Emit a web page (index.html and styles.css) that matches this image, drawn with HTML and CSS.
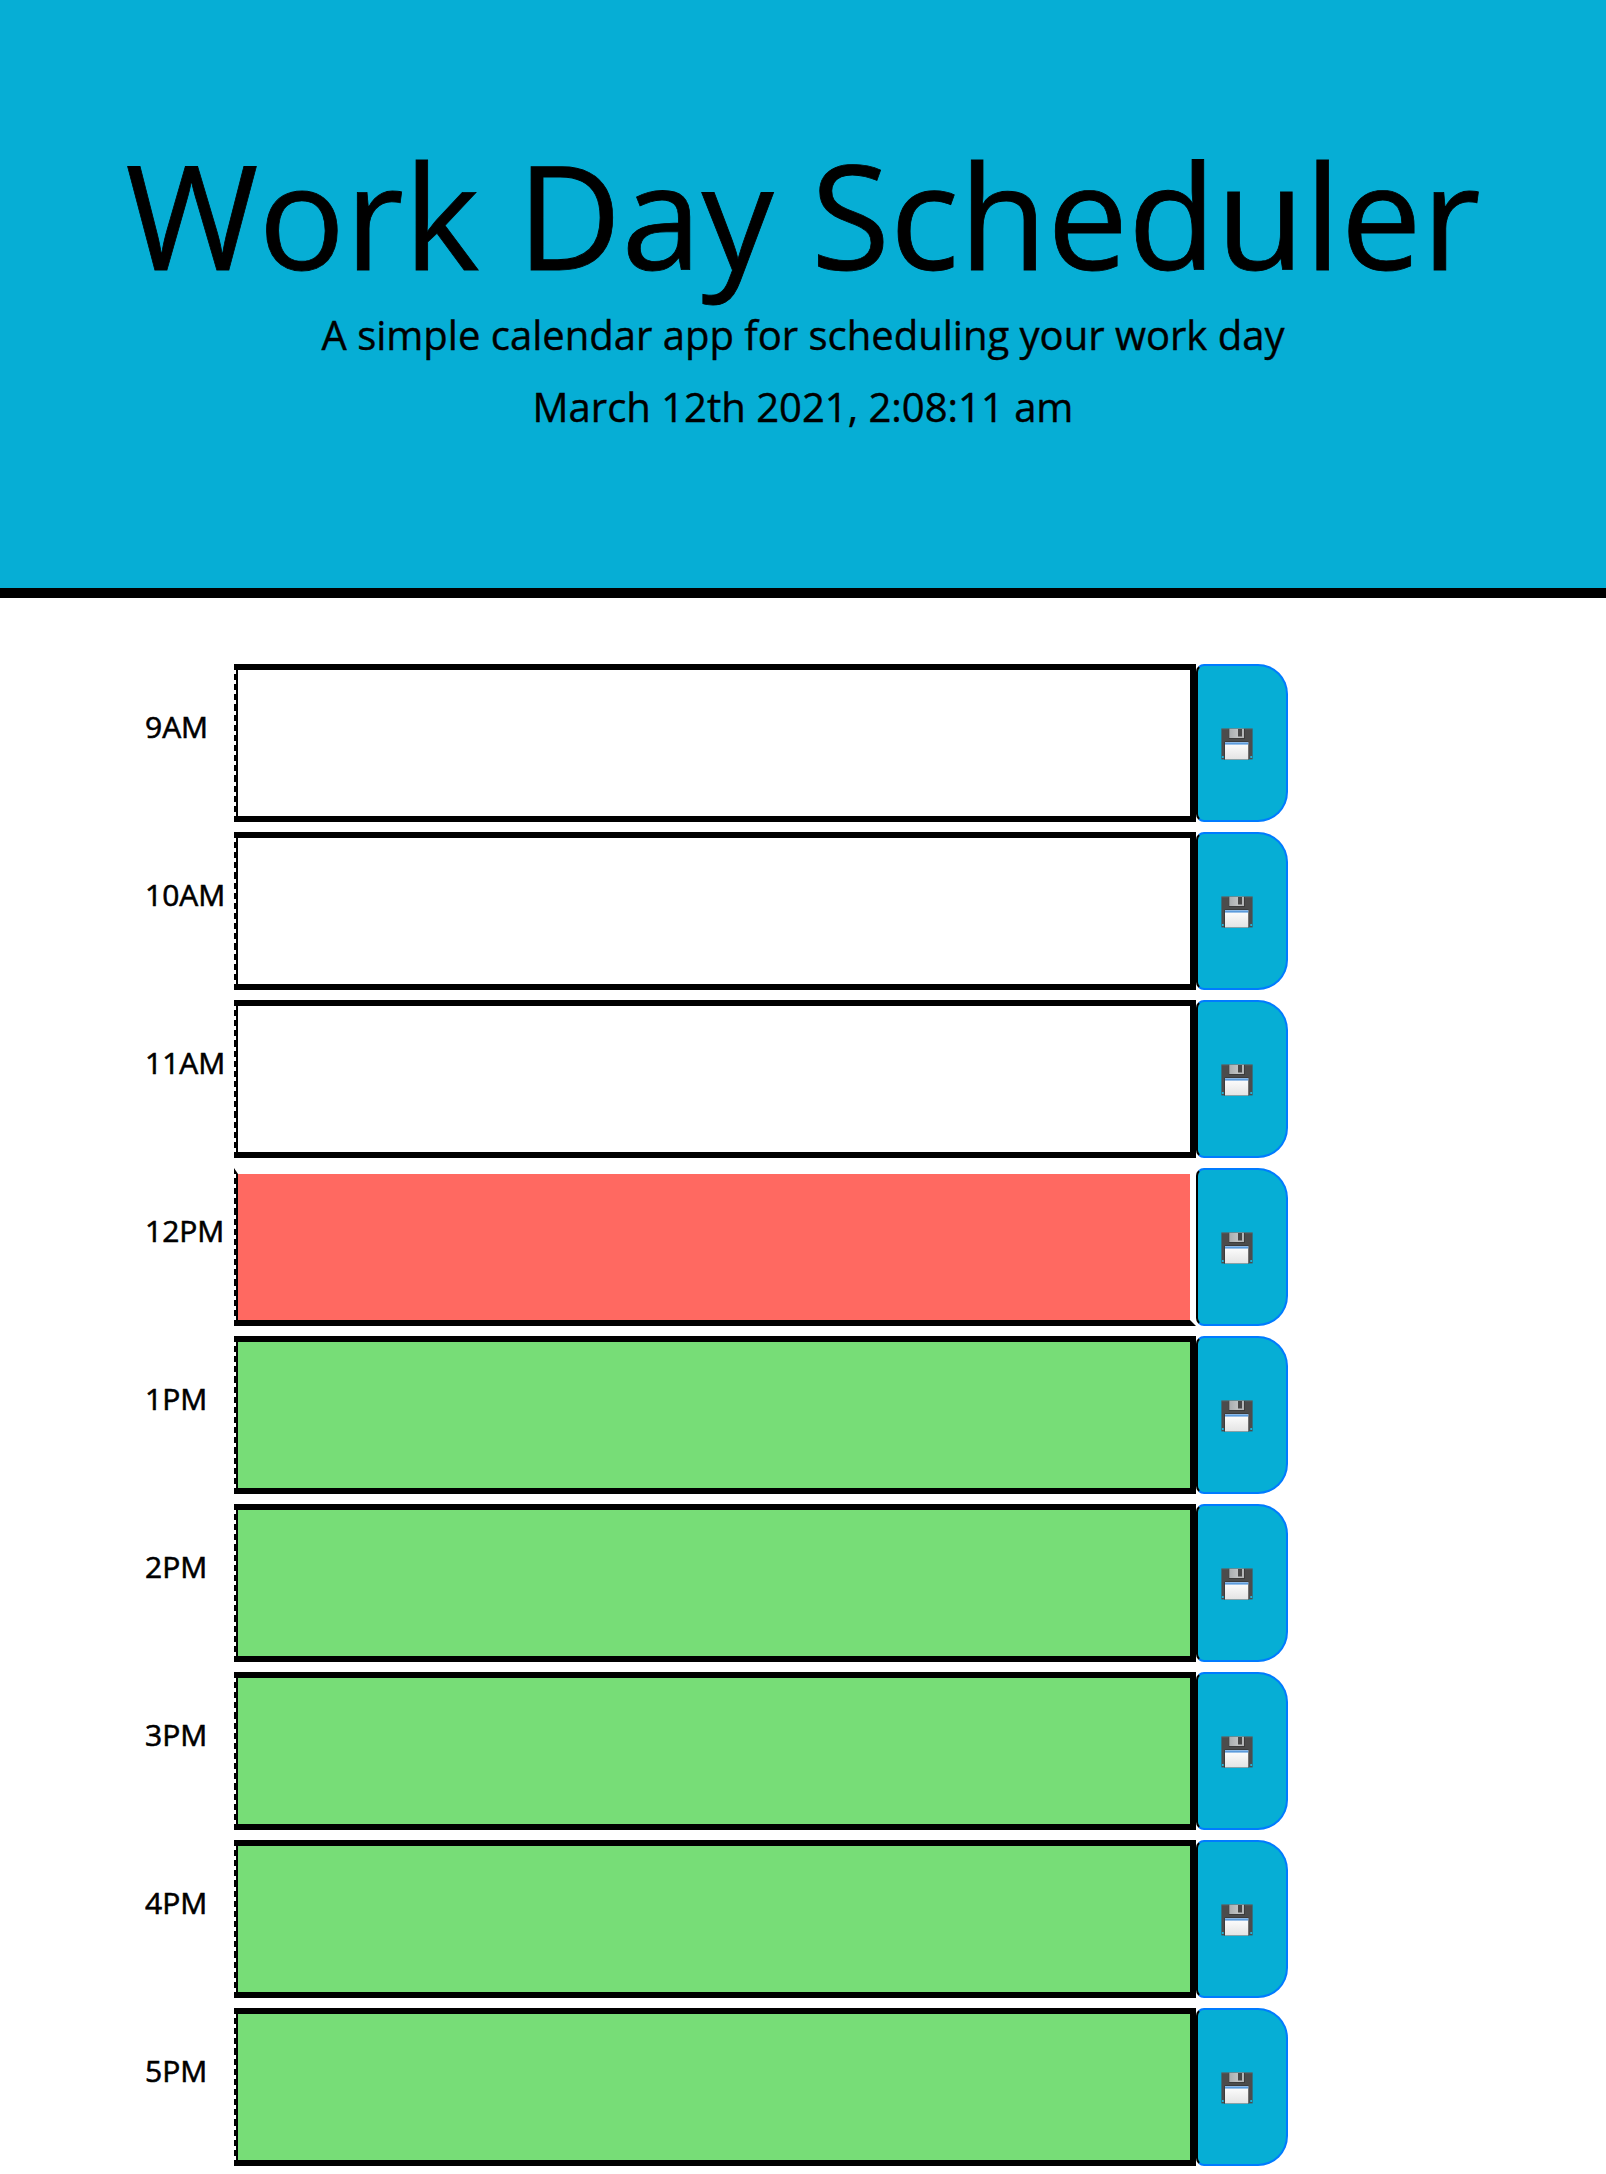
FILE: index.html
```html
<!DOCTYPE html>
<html lang="en">
<head>
<meta charset="utf-8">
<title>Work Day Scheduler</title>
<link rel="stylesheet" href="styles.css">
</head>
<body>
<svg width="0" height="0" class="defs" aria-hidden="true">
  <linearGradient id="paper" x1="0" y1="0" x2="0" y2="1"><stop offset="0" stop-color="#fff"/><stop offset="1" stop-color="#e4e4e4"/></linearGradient>
  <linearGradient id="metal" x1="0" y1="0" x2="1" y2="0"><stop offset="0" stop-color="#aaaeb0"/><stop offset=".6" stop-color="#c0c2c3"/><stop offset="1" stop-color="#b2b4b5"/></linearGradient>
  <symbol id="floppy" viewBox="0 0 32 32">
    <path d="M.4.6H31.6V31.4H.4z" fill="#4c4c4c"/>
    <path d="M.4.6H31.6V1.3H.4z" fill="#6a6a6a"/>
    <path d="M7.8 1H24V11H7.8z" fill="#3c3c3c"/>
    <path d="M8.3.7H23V10H8.3z" fill="url(#metal)"/>
    <path d="M17 1H21V8.5H17z" fill="#484848"/>
    <path d="M3 15Q3 13 5 13H26Q28 13 28 15V31.4H3z" fill="#3b3b3b"/>
    <path d="M4 14H27.3V31.5H4z" fill="url(#paper)"/>
    <path d="M4 14.3H27.3V16.6H4z" fill="#5c9bdc"/>
    <path d="M.9 28H2.7V30H.9zM29.3 28H31.1V30H29.3z" fill="#22b2d8"/>
  </symbol>
</svg>
<header class="header">
  <h1 class="title">Work Day Scheduler</h1>
  <p class="lead">A simple calendar app for scheduling your work day</p>
  <p class="lead">March 12th 2021, 2:08:11 am</p>
</header>
<main class="schedule">
  <div class="row"><div class="hour">9AM</div><div class="slot"></div><button class="save"><svg class="icon"><use href="#floppy"/></svg></button></div>
  <div class="row"><div class="hour">10AM</div><div class="slot"></div><button class="save"><svg class="icon"><use href="#floppy"/></svg></button></div>
  <div class="row"><div class="hour">11AM</div><div class="slot"></div><button class="save"><svg class="icon"><use href="#floppy"/></svg></button></div>
  <div class="row"><div class="hour">12PM</div><div class="slot present"></div><button class="save"><svg class="icon"><use href="#floppy"/></svg></button></div>
  <div class="row"><div class="hour">1PM</div><div class="slot future"></div><button class="save"><svg class="icon"><use href="#floppy"/></svg></button></div>
  <div class="row"><div class="hour">2PM</div><div class="slot future"></div><button class="save"><svg class="icon"><use href="#floppy"/></svg></button></div>
  <div class="row"><div class="hour">3PM</div><div class="slot future"></div><button class="save"><svg class="icon"><use href="#floppy"/></svg></button></div>
  <div class="row"><div class="hour">4PM</div><div class="slot future"></div><button class="save"><svg class="icon"><use href="#floppy"/></svg></button></div>
  <div class="row"><div class="hour">5PM</div><div class="slot future"></div><button class="save"><svg class="icon"><use href="#floppy"/></svg></button></div>
</main>
</body>
</html>
```
FILE: styles.css
```css
* { box-sizing: border-box; }
body {
  margin: 0;
  background: #fff;
  color: #000;
  font-family: "Open Sans", sans-serif;
}
.defs { display: block; }
.header {
  height: 598px;
  padding-top: 128px;
  border-bottom: 10px solid #000;
  background: #06aed5;
  text-align: center;
}
.title {
  margin: 0 0 5px;
  font-size: 144px;
  font-weight: 400;
  line-height: 172px;
  -webkit-text-stroke: 0.8px #000;
}
.lead {
  margin: 0 0 12px;
  font-size: 40px;
  line-height: 60px;
  -webkit-text-stroke: 0.4px #000;
}
.schedule {
  display: flex;
  flex-direction: column;
  gap: 10px;
  padding: 66px 0 8px 144px;
}
.row {
  display: grid;
  grid-template-columns: 90px 962px 92px;
  height: 158px;
}
.hour {
  padding: 40px 0 0 1px;
  font-size: 30px;
  line-height: 46px;
  -webkit-text-stroke: 0.6px #000;
}
.slot {
  position: relative;
  border: solid #000;
  border-width: 6px 6px 6px 4px;
}
/* light dashes over the outer half of the left border */
.slot::before {
  content: "";
  position: absolute;
  top: 0;
  bottom: 0;
  left: -4px;
  width: 2px;
  background: repeating-linear-gradient(#fff 0 4px, transparent 4px 10.143px);
}
.present {
  border-top-color: #fff;
  border-right-color: #fff;
  background: #ff6961;
  background-clip: padding-box;
}
.future { background: #77dd77; }
.save {
  display: flex;
  align-items: center;
  margin: 0;
  padding: 2px 0 0 23px;
  border: 2px solid #007bff;
  border-left-color: #000;
  border-radius: 8px 30px 30px 8px;
  background: #06aed5;
}
.icon {
  width: 32px;
  height: 32px;
}
```
